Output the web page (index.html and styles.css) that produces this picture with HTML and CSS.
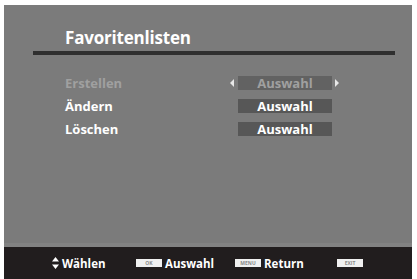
FILE: index.html
```html
<!DOCTYPE html>
<html lang="de">
<head>
<meta charset="utf-8">
<title>Favoritenlisten</title>
<link rel="stylesheet" href="styles.css">
</head>
<body>
<div class="screen">
  <div class="panel">
    <h1 class="title">Favoritenlisten</h1>
    <div class="rule"></div>
    <div class="rows">
      <div class="row dim">
        <span class="label">Erstellen</span>
        <span class="arrow left"></span>
        <span class="value">Auswahl</span>
        <span class="arrow right"></span>
      </div>
      <div class="row">
        <span class="label">Ändern</span>
        <span class="value">Auswahl</span>
      </div>
      <div class="row">
        <span class="label">Löschen</span>
        <span class="value">Auswahl</span>
      </div>
    </div>
  </div>
  <div class="footer">
    <div class="hint h1">
      <svg class="updown" width="7" height="12" viewBox="0 0 7 12"><path d="M3.5 0 L7 4.5 L0 4.5 Z M0 7.5 L7 7.5 L3.5 12 Z" fill="#fff"/></svg>
      <span>Wählen</span>
    </div>
    <div class="hint h2">
      <span class="key">OK</span>
      <span>Auswahl</span>
    </div>
    <div class="hint h3">
      <span class="key">MENU</span>
      <span>Return</span>
    </div>
    <div class="hint h4">
      <span class="key">EXIT</span>
    </div>
  </div>
</div>
</body>
</html>
```
FILE: styles.css
```css
html, body {
  margin: 0;
  padding: 0;
  background: #ffffff;
}
body {
  font-family: "Open Sans", "DejaVu Sans", sans-serif;
  font-weight: 700;
}
.screen {
  margin: 5px 0 0 4px;
  width: 408px;
  height: 274px;
  display: flex;
  flex-direction: column;
}
.panel {
  flex: 1;
  background: #7b7b7b;
  border-bottom: 4px solid #828282;
  display: flex;
  flex-direction: column;
}
.title {
  margin: 22px 0 0 61px;
  font-size: 17px;
  line-height: 22px;
  font-weight: 700;
  color: #ffffff;
  letter-spacing: -0.2px;
}
.rule {
  margin: 2px 0 0 29px;
  width: 362px;
  height: 4px;
  background: #2f2f2f;
}
.rows {
  margin-top: 21px;
  display: flex;
  flex-direction: column;
  gap: 9px;
}
.row {
  display: flex;
  align-items: center;
  height: 14px;
  padding-left: 61px;
  position: relative;
  color: #ffffff;
  font-size: 13px;
}
.row .label {
  width: 173px;
}
.row .value {
  width: 94px;
  height: 14px;
  line-height: 14px;
  background: #575757;
  text-align: center;
  font-size: 13px;
}
.row.dim {
  color: #a0a0a0;
}
.row.dim .value {
  background: #626262;
}
.arrow {
  position: absolute;
  top: 3px;
  width: 0;
  height: 0;
  border-top: 4px solid transparent;
  border-bottom: 4px solid transparent;
}
.arrow.left {
  left: 226px;
  border-right: 4px solid #e8e8e8;
}
.arrow.right {
  left: 331px;
  border-left: 4px solid #e8e8e8;
}
.footer {
  height: 32px;
  flex: none;
  background: #211d1e;
  display: flex;
  align-items: center;
  color: #ffffff;
  font-size: 11.5px;
}
.hint {
  display: flex;
  align-items: center;
  gap: 2px;
}
.h1 { margin-left: 48px; width: 84px; }
.h2 { width: 99px; }
.h3 { width: 102px; }
.key {
  display: inline-block;
  width: 26px;
  height: 8px;
  line-height: 8px;
  background: #f0f0f0;
  color: #8a8a8a;
  font-size: 5px;
  text-align: center;
  margin-right: 1px;
}
.updown {
  margin-right: 1px;
}
```
